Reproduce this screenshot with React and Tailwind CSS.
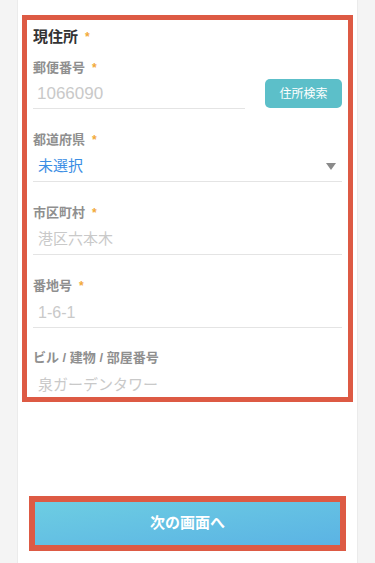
const font = { fontFamily: '"Liberation Sans", "Noto Sans CJK JP", sans-serif' };

function Star() {
  return <span className="ml-[7px] text-[12px] leading-none text-[#f2a93b] relative top-[0px]">*</span>;
}

function Label({ children, required }) {
  return (
    <div className="h-[20px] flex items-center text-[13px] font-bold text-[#8f8f8f]">
      {children}
      {required && <Star />}
    </div>
  );
}

function Field({ label, required, placeholder, size = 'text-[15px]', last }) {
  return (
    <div className={last ? 'mt-[20px]' : 'mt-[21px]'}>
      <Label required={required}>{label}</Label>
      <div className={`h-[32px] flex items-center pl-[5px] pt-[2px] ${last ? '' : 'border-b border-[#e4e4e4]'}`}>
        <span className={`${size} text-[#c9c9c9]`}>{placeholder}</span>
      </div>
    </div>
  );
}

export default function App() {
  return (
    <div className="min-h-screen bg-[#f4f4f4]" style={font}>
      <div className="mx-[17px] min-h-[563px] bg-white border-x border-[#ebebeb] pt-[15px]">
        <div className="mx-[4px] border-[5px] border-[#dd5a44] px-[6px] pt-[6px] h-[387px] overflow-hidden">
          <div className="h-[22px] flex items-center text-[15px] font-bold text-[#333]">
            現住所
            <Star />
          </div>

          <div className="mt-[10px]">
            <Label required>郵便番号</Label>
            <div className="flex items-start">
              <div className="w-[212px] h-[31px] flex items-center pl-[4px] pt-[2px] border-b border-[#e4e4e4]">
                <span className="text-[17px] text-[#c9c9c9]">1066090</span>
              </div>
              <button className="ml-auto mt-[1px] w-[77px] h-[29px] rounded-[5px] bg-[#5cbfc9] text-white text-[12px]">
                住所検索
              </button>
            </div>
          </div>

          <div className="mt-[21px]">
            <Label required>都道府県</Label>
            <div className="h-[32px] flex items-center pl-[5px] pr-[6px] pt-[1px] border-b border-[#e4e4e4]">
              <span className="text-[15px] text-[#3b8ee4]">未選択</span>
              <svg className="ml-auto" width="10" height="7" viewBox="0 0 10 7">
                <path d="M0 0 H10 L5 7 Z" fill="#8a8a8a" />
              </svg>
            </div>
          </div>

          <Field label="市区町村" required placeholder="港区六本木" />
          <Field label="番地号" required placeholder="1-6-1" size="text-[16px]" />
          <Field label="ビル / 建物 / 部屋番号" placeholder="泉ガーデンタワー" last />
        </div>

        <div className="mt-[94px] mx-[11px] border-[6px] border-[#dd5a44]">
          <button className="w-full h-[43px] flex items-center justify-center text-white text-[15px] font-bold bg-gradient-to-br from-[#6dcde2] to-[#5bb3e4]">
            次の画面へ
          </button>
        </div>
      </div>
    </div>
  );
}
